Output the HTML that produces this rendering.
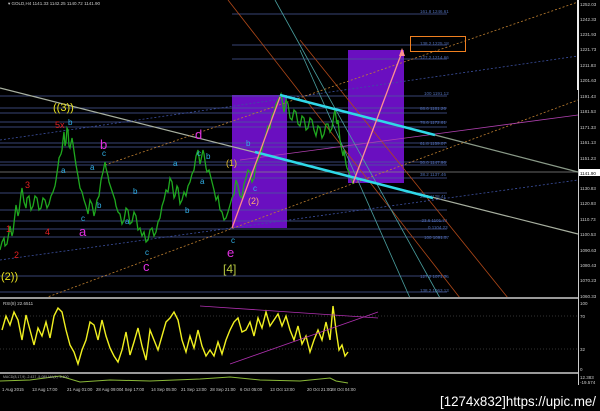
<!DOCTYPE html>
<html><head><style>
html,body{margin:0;padding:0;background:#000;width:600px;height:411px;overflow:hidden}
svg{display:block}
text{font-family:"Liberation Sans",sans-serif}
</style></head><body>
<svg width="600" height="411" viewBox="0 0 600 411" xmlns="http://www.w3.org/2000/svg">
<rect width="600" height="411" fill="#000"/>
<rect x="232" y="95" width="55" height="133" fill="#6a0fc0"/>
<rect x="348" y="50" width="56" height="133" fill="#6a0fc0"/>
<g stroke="#4c5c9c" stroke-width="0.8">
<line x1="232" y1="14" x2="447" y2="14"/>
<line x1="232" y1="45" x2="447" y2="45"/>
<line x1="232" y1="59" x2="447" y2="59"/>
<line x1="0" y1="96" x2="447" y2="96"/>
<line x1="0" y1="108" x2="447" y2="108"/>
<line x1="0" y1="113" x2="447" y2="113"/>
<line x1="0" y1="122" x2="447" y2="122"/>
<line x1="0" y1="127" x2="447" y2="127"/>
<line x1="0" y1="143" x2="447" y2="143"/>
<line x1="0" y1="147" x2="447" y2="147"/>
<line x1="0" y1="162" x2="447" y2="162"/>
<line x1="0" y1="165" x2="447" y2="165"/>
<line x1="0" y1="172" x2="578" y2="172" stroke="#888"/>
<line x1="0" y1="178" x2="447" y2="178"/>
<line x1="0" y1="193" x2="447" y2="193"/>
<line x1="0" y1="210" x2="447" y2="210"/>
<line x1="0" y1="221" x2="447" y2="221"/>
<line x1="0" y1="229" x2="447" y2="229"/>
<line x1="0" y1="237" x2="447" y2="237"/>
<line x1="0" y1="276" x2="447" y2="276"/>
<line x1="0" y1="292" x2="447" y2="292"/>
</g>
<g fill="#4c6ab0" font-size="4.5">
<text x="420" y="13">161.8 1246.61</text><text x="420" y="45">138.2 1225.18</text><text x="420" y="59">127.2 1214.66</text>
<text x="424" y="95">100 1191.12</text><text x="420" y="110">88.6 1181.26</text><text x="420" y="124">78.6 1172.61</text>
<text x="420" y="145">61.8 1159.07</text><text x="420" y="164">50.0 1147.96</text><text x="420" y="176">38.2 1137.46</text>
<text x="420" y="198">23.6 1128.41</text><text x="420" y="222">-23.6 1101.71</text><text x="428" y="229">0 1104.23</text>
<text x="424" y="239">100 1091.57</text><text x="420" y="278">127.2 1071.26</text><text x="420" y="292">138.2 1063.13</text>
</g>
<g fill="none" stroke-width="0.8">
<line x1="228" y1="0" x2="460" y2="298" stroke="#b04818"/>
<line x1="300" y1="40" x2="508" y2="298" stroke="#b04818"/>
<line x1="275" y1="0" x2="440" y2="298" stroke="#4aa0a0"/>
<line x1="300" y1="50" x2="410" y2="298" stroke="#4aa0a0"/>
<line x1="0" y1="88" x2="578" y2="234" stroke="#a8b0a0" stroke-width="1.2"/>
<line x1="435" y1="135" x2="578" y2="172" stroke="#8a9a88" stroke-width="1.2"/>
<line x1="0" y1="140" x2="578" y2="56" stroke="#3c50a0" stroke-dasharray="2,2"/>
<line x1="0" y1="260" x2="578" y2="180" stroke="#3c50a0" stroke-dasharray="2,2"/>
<line x1="45" y1="298" x2="578" y2="100" stroke="#c08030" stroke-dasharray="2,2"/>
<line x1="105" y1="165" x2="578" y2="2" stroke="#c08030" stroke-dasharray="2,2"/>
<line x1="240" y1="160" x2="578" y2="115" stroke="#b040b0"/>
</g>
<polyline fill="none" stroke="#1fa81f" stroke-width="1.3" points="0,250 2,242 4,238 5,246 7,244 9,232 10,226 12,236 13,232 15,214 16,205 18,216 19,212 21,194 22,188 24,202 26,208 27,198 29,196 31,210 33,206 35,196 37,198 39,210 41,208 43,198 45,200 47,208 49,204 51,196 53,192 55,186 56,180 58,166 59,158 61,154 62,150 63,140 64,132 65,146 66,142 67,128 68,130 69,146 70,148 72,138 73,144 75,158 76,165 78,176 80,188 82,192 84,200 86,206 88,214 90,200 92,204 94,216 95,212 97,200 99,196 101,180 103,172 105,162 106,168 108,176 109,182 111,188 113,194 115,200 116,206 118,212 120,214 122,224 124,220 126,208 128,210 130,224 132,222 134,212 136,216 138,230 140,228 142,236 144,232 146,242 148,240 150,230 152,228 154,236 156,232 158,222 160,218 162,206 164,200 166,190 168,192 170,178 172,182 174,198 175,196 177,186 178,188 180,204 182,200 184,192 186,196 188,186 190,182 192,174 194,170 196,156 198,150 200,164 201,160 203,150 204,154 206,168 207,172 209,170 211,178 213,186 214,190 216,200 218,196 220,210 222,212 224,220 226,218 228,212 230,205 232,198 234,194 236,180 238,186 240,196 242,198 244,184 246,178 248,170 250,172 252,182 254,178 256,164 258,160 260,156 262,150 264,140 266,134 268,126 270,128 272,116 274,112 276,104 278,100 280,96 281,94 283,106 284,112 286,100 288,104 290,118 292,120 294,110 296,112 298,124 300,126 302,116 304,118 306,130 308,128 310,118 312,120 314,130 316,136 318,126 320,128 322,138 324,134 326,124 328,124 330,132 332,128 334,114 335,110 337,124 338,120 340,140 341,146 343,156 344,150 346,164 347,168 349,172 350,176 352,180 353,184"/>
<line x1="280" y1="95" x2="435" y2="135" stroke="#30d8e8" stroke-width="2.5"/>
<line x1="255" y1="152" x2="433" y2="198" stroke="#30d8e8" stroke-width="2.5"/>
<line x1="232" y1="228" x2="280" y2="97" stroke="#ff8888" stroke-width="1.3"/>
<line x1="353" y1="183" x2="402" y2="52" stroke="#ff9090" stroke-width="1.3"/>
<polygon points="402,48 399,56 405,56" fill="#ff9090"/>
<rect x="410.5" y="36.5" width="55" height="15" fill="none" stroke="#f08020" stroke-width="1"/>
<g font-size="8">
<text x="53" y="111" fill="#e8e020" font-size="11">((3))</text>
<text x="55" y="128" fill="#e02020" font-size="9">5x</text>
<text x="68" y="125" fill="#30b0e8">b</text>
<text x="100" y="149" fill="#e030e0" font-size="13">b</text>
<text x="102" y="156" fill="#30b0e8">c</text>
<text x="61" y="173" fill="#30b0e8">a</text><text x="90" y="170" fill="#30b0e8">a</text>
<text x="25" y="188" fill="#e02020" font-size="9">3</text>
<text x="6" y="232" fill="#e02020" font-size="9">1</text>
<text x="14" y="258" fill="#e02020" font-size="9">2</text>
<text x="45" y="235" fill="#e02020" font-size="9">4</text>
<text x="79" y="236" fill="#e030e0" font-size="13">a</text>
<text x="1" y="280" fill="#e8e020" font-size="11">(2))</text>
<text x="81" y="221" fill="#30b0e8">c</text><text x="145" y="255" fill="#30b0e8">c</text>
<text x="143" y="271" fill="#e030e0" font-size="13">c</text>
<text x="97" y="208" fill="#30b0e8">b</text><text x="133" y="194" fill="#30b0e8">b</text><text x="185" y="213" fill="#30b0e8">b</text>
<text x="125" y="224" fill="#30b0e8">a</text><text x="173" y="166" fill="#30b0e8">a</text><text x="200" y="184" fill="#30b0e8">a</text>
<text x="195" y="139" fill="#e030e0" font-size="13">d</text>
<text x="197" y="156" fill="#30b0e8">c</text><text x="206" y="159" fill="#30b0e8">b</text>
<text x="226" y="166" fill="#e8c030" font-size="9">(1)</text>
<text x="246" y="146" fill="#30b0e8">b</text>
<text x="253" y="191" fill="#30b0e8">c</text>
<text x="248" y="204" fill="#ffb070" font-size="9">(2)</text>
<text x="231" y="243" fill="#30b0e8">c</text>
<text x="227" y="257" fill="#e030e0" font-size="13">e</text>
<text x="223" y="273" fill="#b8c840" font-size="12">[4]</text>
</g>
<text x="8" y="5" fill="#ccc" font-size="4.5">▾ GOLD,H4  1141.33 1142.25 1140.72 1141.90</text>
<rect x="0" y="297" width="578" height="2" fill="#999"/>
<rect x="0" y="372" width="578" height="2" fill="#999"/>
<rect x="578" y="0" width="1" height="385" fill="#ccc"/>
<rect x="577" y="0" width="2" height="90" fill="#eee"/>
<line x1="0" y1="316" x2="578" y2="316" stroke="#333" stroke-dasharray="1,2"/>
<line x1="0" y1="349" x2="578" y2="349" stroke="#333" stroke-dasharray="1,2"/>
<text x="3" y="305" fill="#ccc" font-size="4.5">RSI(8) 22.6511</text>
<polyline fill="none" stroke="#f0f020" stroke-width="1.4" points="2,330 6,316 10,325 14,312 18,320 22,340 26,315 30,330 34,345 38,328 42,336 46,322 50,338 54,316 58,308 62,312 66,330 70,345 74,352 78,364 82,350 86,340 90,322 94,325 98,340 102,320 106,336 110,348 114,356 118,362 122,350 126,332 130,355 134,342 138,328 142,346 146,360 150,330 154,340 158,350 162,336 166,322 170,318 174,312 178,320 182,340 186,352 190,336 194,348 198,330 202,346 206,356 210,350 214,356 218,342 222,354 226,340 230,330 234,322 238,318 242,332 246,330 250,322 254,336 258,318 262,328 266,312 270,326 274,320 278,314 282,326 286,316 290,330 294,340 298,326 302,344 306,336 310,352 314,340 318,330 322,340 326,322 330,340 333,306 336,330 339,350 342,345 345,356 348,352"/>
<g stroke="#b030b0" stroke-width="0.8">
<line x1="200" y1="306" x2="378" y2="318"/>
<line x1="230" y1="364" x2="378" y2="312"/>
</g>
<polyline fill="none" stroke="#8ab838" stroke-width="1" points="0,381 30,380 60,376 80,382 110,380 150,381 200,379 230,377 260,380 300,381 330,378 336,381 348,383"/>
<text x="3" y="378" fill="#aaa" font-size="3.5">MACD(8,17,9)  -2.437  -5.085  MA(1)  -6.600</text>
<g fill="#ccc" font-size="4.5">
<text x="580" y="6">1252.03</text><text x="580" y="21">1242.33</text><text x="580" y="36">1231.93</text><text x="580" y="51">1221.73</text>
<text x="580" y="67">1211.83</text><text x="580" y="82">1201.63</text><text x="580" y="98">1191.43</text><text x="580" y="113">1181.53</text>
<text x="580" y="129">1171.33</text><text x="580" y="144">1161.13</text><text x="580" y="160">1151.23</text>
<text x="580" y="190">1130.83</text><text x="580" y="205">1120.93</text><text x="580" y="221">1110.73</text><text x="580" y="236">1100.53</text>
<text x="580" y="252">1090.63</text><text x="580" y="267">1080.43</text><text x="580" y="282">1070.23</text><text x="580" y="298">1060.33</text>
<text x="580" y="305">100</text><text x="580" y="318">70</text><text x="580" y="351">32</text><text x="580" y="371">0</text>
<text x="580" y="379">12.383</text><text x="580" y="384">-19.574</text>
</g>
<rect x="579" y="169" width="21" height="7" fill="#fff"/>
<text x="580" y="175" fill="#000" font-size="4.5">1141.90</text>
<g fill="#ccc" font-size="4.3">
<text x="2" y="391">1 Aug 2015</text><text x="32" y="391">13 Aug 17:00</text><text x="67" y="391">21 Aug 01:00</text>
<text x="96" y="391">28 Aug 09:00</text><text x="121" y="391">4 Sep 17:00</text><text x="151" y="391">14 Sep 05:00</text>
<text x="181" y="391">21 Sep 13:00</text><text x="210" y="391">28 Sep 21:00</text><text x="240" y="391">6 Oct 05:00</text>
<text x="270" y="391">13 Oct 13:00</text><text x="307" y="391">20 Oct 21:00</text><text x="331" y="391">28 Oct 04:00</text>
</g>
<text x="440" y="406" fill="#fff" font-size="14" font-family="Liberation Mono, monospace" textLength="156" lengthAdjust="spacingAndGlyphs">[1274x832]https://upic.me/</text>
</svg>
</body></html>
